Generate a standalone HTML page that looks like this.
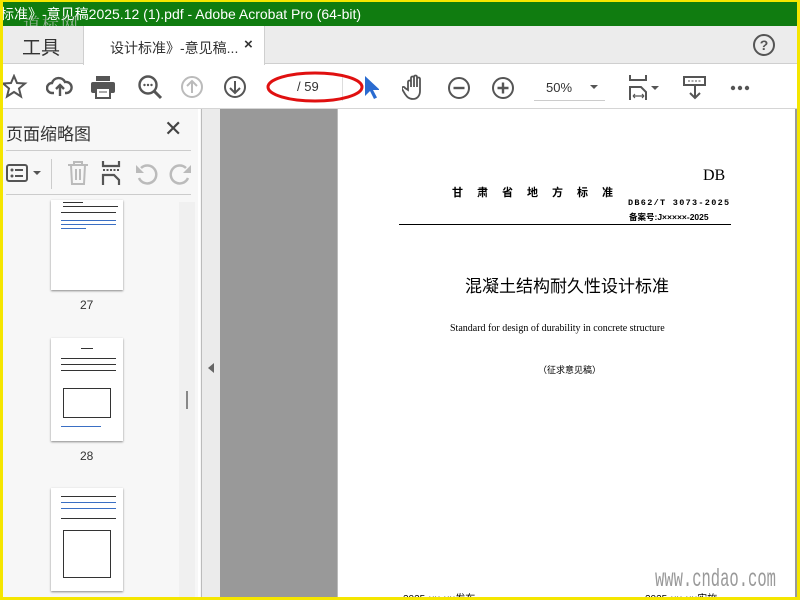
<!DOCTYPE html>
<html><head><meta charset="utf-8"><style>
*{margin:0;padding:0;box-sizing:border-box}
body{width:800px;height:600px;overflow:hidden;background:#f5e600;font-family:"Liberation Sans","Noto Sans CJK SC",sans-serif;position:relative}
.a{position:absolute}
svg{position:absolute}
.thumb{position:absolute;left:48px;width:72px;background:#fff;box-shadow:0 1px 2px #888}
.ln{position:absolute;height:1px;background:#333}
.bl{background:#3a6fc4}
</style></head><body>
<div class="a" style="left:3px;top:2px;right:3px;bottom:3px;background:#fff;overflow:hidden">
<div class="a" style="left:-3px;top:0;width:797px;height:24px;background:#107c10;color:#fff;font-size:14px;line-height:24px;white-space:nowrap">标准》-意见稿2025.12 (1).pdf - Adobe Acrobat Pro (64-bit)</div>
<div class="a" style="left:20px;top:8px;color:rgba(200,200,200,.7);font-size:17px;letter-spacing:2px;font-family:'Noto Serif CJK SC',serif">道标网</div>
<div class="a" style="left:0;top:24px;width:794px;height:38px;background:#ececec;border-bottom:1px solid #cfcfcf"></div>
<div class="a" style="left:19px;top:31px;font-size:19px;color:#333">工具</div>
<div class="a" style="left:80px;top:24px;width:182px;height:39px;background:#fff;border-left:1px solid #cfcfcf;border-right:1px solid #cfcfcf"></div>
<div class="a" style="left:107px;top:36px;font-size:14px;color:#333">设计标准》-意见稿...</div>
<div class="a" style="left:241px;top:34px;font-size:15px;color:#333;font-weight:bold">×</div>
<svg style="left:749px;top:31px" width="24" height="24"><circle cx="12" cy="12" r="10" fill="none" stroke="#555" stroke-width="2"/><text x="12" y="17" font-size="14" font-weight="bold" text-anchor="middle" fill="#555" font-family="Liberation Sans">?</text></svg>
<div class="a" style="left:0;top:106px;width:794px;height:1px;background:#d5d5d5"></div>
<svg style="left:0;top:72px" width="26" height="26"><path d="M11 2l3 7 8 .5-6 5 2 8-7-4.5-7 4.5 2-8-6-5 8-.5z" fill="none" stroke="#555" stroke-width="2"/></svg>
<svg style="left:43px;top:72px" width="28" height="26"><path d="M8 19H6a5 5 0 0 1 0-10 7 7 0 0 1 13-1 5 5 0 0 1 2 11h-2M14 22V11M10 15l4-4 4 4" fill="none" stroke="#555" stroke-width="2.4"/></svg>
<svg style="left:87px;top:73px" width="26" height="24"><rect x="6" y="1" width="14" height="5" fill="#555"/><rect x="1" y="7" width="24" height="11" rx="2" fill="#555"/><rect x="6" y="13" width="14" height="10" fill="#fff" stroke="#555" stroke-width="2"/><line x1="9" y1="17" x2="17" y2="17" stroke="#555"/></svg>
<svg style="left:134px;top:72px" width="28" height="28"><circle cx="11" cy="11" r="8.5" fill="none" stroke="#555" stroke-width="2.4"/><path d="M17 17l7 7" stroke="#555" stroke-width="3"/><circle cx="7.5" cy="11" r="1.2" fill="#555"/><circle cx="11" cy="11" r="1.2" fill="#555"/><circle cx="14.5" cy="11" r="1.2" fill="#555"/></svg>
<svg style="left:177px;top:73px" width="24" height="24"><circle cx="12" cy="12" r="10" fill="none" stroke="#bbb" stroke-width="2"/><path d="M12 18V6M7 11l5-5 5 5" fill="none" stroke="#bbb" stroke-width="2"/></svg>
<svg style="left:220px;top:73px" width="24" height="24"><circle cx="12" cy="12" r="10" fill="none" stroke="#555" stroke-width="2"/><path d="M12 6v12M7 13l5 5 5-5" fill="none" stroke="#555" stroke-width="2"/></svg>
<div class="a" style="left:276px;top:72px;width:64px;height:27px;border-right:1px solid #ddd"></div>
<div class="a" style="left:294px;top:77px;font-size:13px;color:#333">/ 59</div>
<svg style="left:262px;top:66px" width="106" height="38"><ellipse cx="50" cy="19" rx="47" ry="14" fill="none" stroke="#e01010" stroke-width="3"/></svg>
<svg style="left:360px;top:73px" width="16" height="26"><path d="M2 1v20l5-5 4 8 3-1.5-4-7.5h7z" fill="#2a6bd0"/></svg>
<svg style="left:399px;top:72px" width="26" height="28"><path d="M6 16V8a1.5 1.5 0 0 1 3 0v5V4a1.5 1.5 0 0 1 3 0v9V3a1.5 1.5 0 0 1 3 0v10V5a1.5 1.5 0 0 1 3 0v12c0 5-3 8-7 8s-6-2-8-5l-3-5a1.5 1.5 0 0 1 3-1z" fill="none" stroke="#555" stroke-width="1.8"/></svg>
<svg style="left:444px;top:74px" width="24" height="24"><circle cx="12" cy="12" r="10" fill="none" stroke="#555" stroke-width="2"/><path d="M6.5 12h11" stroke="#555" stroke-width="2.4"/></svg>
<svg style="left:488px;top:74px" width="24" height="24"><circle cx="12" cy="12" r="10" fill="none" stroke="#555" stroke-width="2"/><path d="M6.5 12h11M12 6.5v11" stroke="#555" stroke-width="2.4"/></svg>
<div class="a" style="left:531px;top:75px;width:71px;height:24px;border-bottom:1px solid #ccc"></div>
<div class="a" style="left:543px;top:78px;font-size:13px;color:#333">50%</div>
<svg style="left:586px;top:82px" width="10" height="6"><path d="M1 1h8L5 5z" fill="#555"/></svg>
<svg style="left:625px;top:72px" width="34" height="28"><path d="M2 1v5h16V1M2 26v-13h11l5 5v8" fill="none" stroke="#555" stroke-width="2"/><path d="M5 22h11M5 22l2-2M5 22l2 2M16 22l-2-2M16 22l-2 2" stroke="#555" stroke-width="1.2" fill="none"/><path d="M23 12h8l-4 4z" fill="#555"/></svg>
<svg style="left:680px;top:74px" width="24" height="24"><rect x="1" y="1" width="21" height="8" fill="none" stroke="#555" stroke-width="2"/><path d="M5 5h13" stroke="#555" stroke-dasharray="2 1.5"/><path d="M12 9v13M7 17l5 5 5-5" fill="none" stroke="#555" stroke-width="2"/></svg>
<svg style="left:726px;top:82px" width="22" height="8"><circle cx="4" cy="4" r="2.2" fill="#555"/><circle cx="11" cy="4" r="2.2" fill="#555"/><circle cx="18" cy="4" r="2.2" fill="#555"/></svg>
<div class="a" style="left:0;top:107px;width:198px;height:500px;background:#f7f7f7"></div>
<div class="a" style="left:3px;top:118px;font-size:17px;color:#333">页面缩略图</div>
<div class="a" style="left:161px;top:114px;font-size:22px;color:#444">✕</div>
<div class="a" style="left:3px;top:148px;width:185px;height:1px;background:#ccc"></div>
<div class="a" style="left:3px;top:192px;width:185px;height:1px;background:#ccc"></div>
<svg style="left:2px;top:160px" width="40" height="24"><rect x="2" y="3" width="20" height="16" rx="2" fill="none" stroke="#555" stroke-width="2"/><circle cx="7" cy="8" r="1.5" fill="#555"/><circle cx="7" cy="14" r="1.5" fill="#555"/><path d="M10 8h8M10 14h8" stroke="#555" stroke-width="2"/><path d="M28 9h8l-4 4z" fill="#555"/></svg>
<div class="a" style="left:48px;top:157px;width:1px;height:30px;background:#ccc"></div>
<svg style="left:63px;top:158px" width="24" height="26"><path d="M2 5h20M8 5V2h8v3M5 5l1 19h12l1-19M10 9v11M14 9v11" fill="none" stroke="#bbb" stroke-width="2"/></svg>
<svg style="left:97px;top:158px" width="24" height="26"><path d="M3 1v5h16V1M3 25V15h11l5 5v5" fill="none" stroke="#555" stroke-width="2.2"/><path d="M3 10h16" stroke="#555" stroke-width="2" stroke-dasharray="2 1.5"/></svg>
<svg style="left:131px;top:159px" width="26" height="26"><path d="M7 7a9 9 0 1 1-2 10" fill="none" stroke="#bbb" stroke-width="2.5"/><path d="M2 4v8h8z" fill="#bbb"/></svg>
<svg style="left:164px;top:159px" width="26" height="26"><path d="M19 7a9 9 0 1 0 2 10" fill="none" stroke="#bbb" stroke-width="2.5"/><path d="M24 4v8h-8z" fill="#bbb"/></svg>
<div class="a" style="left:176px;top:200px;width:16px;height:400px;background:#f0f0f0"></div>
<div class="a" style="left:183px;top:389px;width:2px;height:18px;background:#888"></div>
<div class="a" style="left:195px;top:107px;width:2px;height:500px;background:#fff"></div>
<div class="a" style="left:198px;top:107px;width:1px;height:500px;background:#bbb"></div>
<div class="thumb" style="top:198px;height:90px">
<div class="ln" style="left:12px;top:2px;width:20px"></div><div class="ln" style="left:12px;top:6px;width:55px"></div><div class="ln" style="left:10px;top:12px;width:55px"></div><div class="ln bl" style="left:10px;top:20px;width:55px"></div><div class="ln bl" style="left:10px;top:24px;width:55px"></div><div class="ln bl" style="left:10px;top:28px;width:25px"></div>
</div>
<div class="a" style="left:77px;top:296px;font-size:12px;color:#333">27</div>
<div class="thumb" style="top:336px;height:103px">
<div class="ln" style="left:30px;top:10px;width:12px"></div><div class="ln" style="left:10px;top:20px;width:55px"></div><div class="ln" style="left:10px;top:26px;width:55px"></div><div class="ln" style="left:10px;top:32px;width:55px"></div>
<div class="a" style="left:12px;top:50px;width:48px;height:30px;border:1px solid #333"></div><div class="ln bl" style="left:10px;top:88px;width:40px"></div>
</div>
<div class="a" style="left:77px;top:447px;font-size:12px;color:#333">28</div>
<div class="thumb" style="top:486px;height:103px">
<div class="ln" style="left:10px;top:8px;width:55px"></div><div class="ln bl" style="left:10px;top:14px;width:55px"></div><div class="ln bl" style="left:10px;top:20px;width:55px"></div><div class="ln" style="left:10px;top:30px;width:55px"></div>
<div class="a" style="left:12px;top:42px;width:48px;height:48px;border:1px solid #333"></div>
</div>
<div class="a" style="left:199px;top:107px;width:18px;height:500px;background:#ebebeb"></div>
<svg style="left:204px;top:360px" width="8" height="12"><path d="M7 1v10L1 6z" fill="#666"/></svg>
<div class="a" style="left:217px;top:107px;width:117px;height:500px;background:#999"></div>
<div class="a" style="left:334px;top:107px;width:1px;height:500px;background:#bbb"></div>
<div class="a" style="left:792px;top:107px;width:2px;height:500px;background:#999"></div>
<div class="a" style="left:700px;top:165px;font-size:16px;font-family:'Liberation Serif',serif">DB</div>
<div class="a" style="left:449px;top:182px;font-size:11px;font-weight:bold;letter-spacing:14px;font-family:'Noto Sans CJK SC',sans-serif">甘肃省地方标准</div>
<div class="a" style="left:625px;top:196px;font-size:8.5px;font-weight:bold;letter-spacing:1.3px;font-family:'Liberation Mono',monospace">DB62/T 3073-2025</div>
<div class="a" style="left:626px;top:209px;font-size:8.5px;font-weight:bold">备案号:J×××××-2025</div>
<div class="a" style="left:396px;top:222px;width:332px;height:1px;background:#000"></div>
<div class="a" style="left:462px;top:270px;font-size:17px;font-family:'Noto Sans CJK SC',sans-serif">混凝土结构耐久性设计标准</div>
<div class="a" style="left:447px;top:321px;font-size:10px;font-family:'Liberation Serif',serif">Standard for design of durability in concrete structure</div>
<div class="a" style="left:535px;top:361px;font-size:9px">（征求意见稿）</div>
<div class="a" style="left:652px;top:563px;font-size:25px;color:#999;font-family:'Liberation Mono',monospace;transform:scaleX(.62);transform-origin:left">www.cndao.com</div>
<div class="a" style="left:400px;top:588px;font-size:10px">2025-××-××发布</div>
<div class="a" style="left:642px;top:588px;font-size:10px">2025-××-××实施</div>
</div>
</body></html>
